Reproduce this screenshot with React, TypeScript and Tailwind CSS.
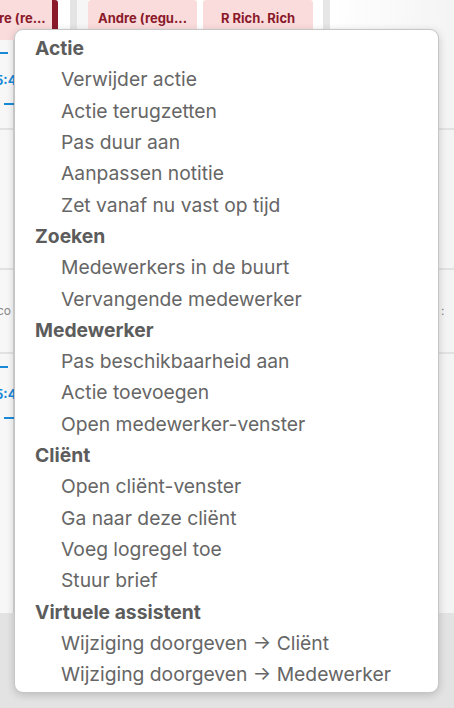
const groups = [
  {
    title: 'Actie',
    items: ['Verwijder actie', 'Actie terugzetten', 'Pas duur aan', 'Aanpassen notitie', 'Zet vanaf nu vast op tijd'],
  },
  {
    title: 'Zoeken',
    items: ['Medewerkers in de buurt', 'Vervangende medewerker'],
  },
  {
    title: 'Medewerker',
    items: ['Pas beschikbaarheid aan', 'Actie toevoegen', 'Open medewerker-venster'],
  },
  {
    title: 'Cliënt',
    items: ['Open cliënt-venster', 'Ga naar deze cliënt', 'Voeg logregel toe', 'Stuur brief'],
  },
  {
    title: 'Virtuele assistent',
    items: ['Wijziging doorgeven → Cliënt', 'Wijziging doorgeven → Medewerker'],
  },
]

function Slot() {
  return (
    <div className="flex flex-col text-[13px] font-bold text-[#1a8ad8] leading-none">
      <div className="mt-[12px] h-[2px] w-[8px] bg-[#1a8ad8]" />
      <div className="mt-[20px] -ml-[5px] whitespace-nowrap">5:4</div>
      <div className="mt-[16px] ml-[4px] h-[2px] w-[10px] bg-[#1a8ad8]" />
    </div>
  )
}

export default function App() {
  return (
    <div className="relative w-[454px] h-[708px] overflow-hidden bg-white" style={{ fontFamily: 'Inter, "Noto Sans", sans-serif' }}>
      {/* background planning board */}
      <div className="flex flex-col h-full">
        <div className="flex h-[40px] shrink-0">
          <div className="w-[52px] bg-[#fadcdd] flex items-end pb-[12px] text-[13px] font-bold text-[#8a1a2a] whitespace-nowrap overflow-hidden">
            <span className="-ml-[1px]">re (re...</span>
          </div>
          <div className="w-[6px] bg-[#8a1a2a] rounded-tr-[3px]" />
          <div className="w-[12px] bg-white" />
          <div className="w-[7px] bg-[#e4e4e4]" />
          <div className="w-[11px] bg-[#f6f6f6]" />
          <div className="w-[109px] bg-[#fadcdd] rounded-[3px] flex items-end justify-center pb-[12px] text-[13px] font-bold text-[#8a1a2a]">
            Andre (regu...
          </div>
          <div className="w-[6px] bg-white" />
          <div className="w-[110px] bg-[#fadcdd] rounded-[3px] flex items-end justify-center pb-[12px] text-[13px] font-bold text-[#8a1a2a]">
            R Rich. Rich
          </div>
          <div className="w-[10px] bg-white" />
          <div className="w-[7px] bg-[#e6e6e6]" />
          <div className="flex-1 bg-gradient-to-r from-white to-[#f4f4f4]" />
        </div>
        <div className="flex-1 flex justify-between">
          <div className="w-[14px] bg-[#f7f7f7] border-r border-[#d8d8d8] flex flex-col">
            <div className="h-[88px]">
              <Slot />
            </div>
            <div className="h-[140px] border-t-2 border-[#e2e2e2]" />
            <div className="h-[84px] border-t-2 border-[#e2e2e2] flex items-center text-[12px] text-[#888] whitespace-nowrap">
              <span className="-ml-[3px]">co</span>
            </div>
            <div className="flex-1 border-t-2 border-[#e2e2e2]">
              <Slot />
            </div>
          </div>
          <div className="w-[15px] bg-[#f4f4f4] flex flex-col">
            <div className="h-[88px]" />
            <div className="h-[140px] border-t-2 border-[#e2e2e2]" />
            <div className="h-[84px] border-t-2 border-[#e2e2e2] flex items-center pl-[2px] text-[12px] text-[#888]">:</div>
            <div className="flex-1 border-t-2 border-[#e2e2e2]" />
          </div>
        </div>
        <div className="h-[95px] shrink-0 bg-[#e3e3e3]" />
      </div>

      {/* context menu */}
      <div className="absolute left-[14px] top-[29px] w-[425px] rounded-[9px] border border-[#c6c6c6] bg-white pt-[3px] pb-[2px] shadow-[0_2px_8px_rgba(0,0,0,0.18)]">
        {groups.map((g) => (
          <div key={g.title}>
            <div className="h-[31.3px] flex items-center pl-[20px] text-[19.3px] font-bold text-[#5c5c5c]">{g.title}</div>
            {g.items.map((it) => (
              <div key={it} className="h-[31.3px] flex items-center pl-[46px] text-[19.3px] text-[#666666]">
                {it}
              </div>
            ))}
          </div>
        ))}
      </div>
    </div>
  )
}
